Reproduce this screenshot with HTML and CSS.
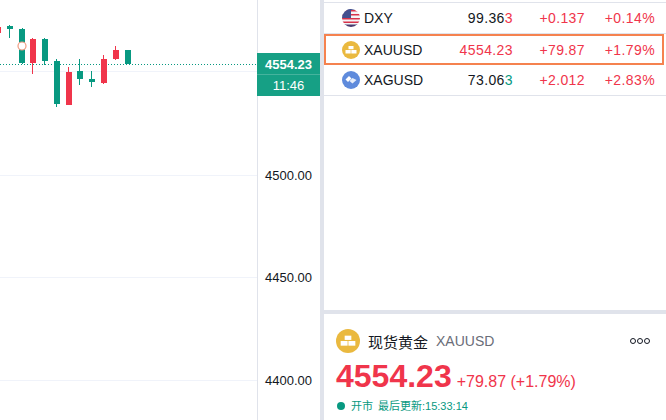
FILE: index.html
```html
<!DOCTYPE html>
<html lang="zh">
<head>
  <meta charset="UTF-8" />
  <title>XAUUSD</title>
  <link rel="stylesheet" href="styles.css">
</head>
<body>

<div class="page">
  <div class="chart">
    <svg class="plot" width="257" height="420" viewBox="0 0 257 420">
      <!-- grid lines -->
      <g fill="#f0f3fa">
        <rect x="0" y="71" width="257" height="1" />
        <rect x="0" y="175" width="257" height="1" />
        <rect x="0" y="277" width="257" height="1" />
        <rect x="0" y="380" width="257" height="1" />
      </g>
      <line x1="0" y1="64.5" x2="257" y2="64.5" stroke="#089981" stroke-width="1" stroke-dasharray="1 2" />
      <!-- green candles -->
      <g fill="#089981">
        <rect x="9" y="25" width="1" height="13" />
        <rect x="7" y="26" width="6" height="3" />
        <rect x="22" y="28" width="1" height="36" />
        <rect x="19" y="29" width="6" height="34" />
        <rect x="44" y="38" width="1" height="27" />
        <rect x="42" y="39" width="6" height="22" />
        <rect x="56" y="59" width="1" height="48" />
        <rect x="54" y="61" width="6" height="43" />
        <rect x="79" y="59" width="1" height="26" />
        <rect x="77" y="71" width="6" height="8" />
        <rect x="91" y="71" width="1" height="16" />
        <rect x="89" y="79" width="6" height="3" />
        <rect x="125" y="50" width="6" height="14" />
      </g>
      <!-- red candles -->
      <g fill="#f0354b">
        <rect x="0" y="27" width="1" height="6" />
        <rect x="32" y="38" width="1" height="36" />
        <rect x="30" y="39" width="6" height="24" />
        <rect x="68" y="67" width="1" height="38" />
        <rect x="66" y="72" width="6" height="33" />
        <rect x="103" y="55" width="1" height="29" />
        <rect x="101" y="59" width="6" height="24" />
        <rect x="115" y="46" width="1" height="14" />
        <rect x="113" y="50" width="6" height="9" />
      </g>
      <circle cx="22" cy="46" r="4" fill="#fff" stroke="#f09a80" stroke-width="1.2" />
    </svg>

    <div class="axis">
      <div class="last-tag">
        <div class="tag-price">4554.23</div>
        <div class="tag-time">11:46</div>
      </div>
      <span class="tick tick-4500">4500.00</span>
      <span class="tick tick-4450">4450.00</span>
      <span class="tick tick-4400">4400.00</span>
    </div>
  </div>

  <div class="side">
    <div class="watchlist">
      <div class="row">
        <svg class="logo" width="18" height="18" viewBox="0 0 18 18">
          <defs><clipPath id="flagClip"><circle cx="9" cy="9" r="9" /></clipPath></defs>
          <g clip-path="url(#flagClip)">
            <rect width="18" height="18" fill="#f4f4f6" />
            <rect y="1" width="18" height="1.5" fill="#d8324a" />
            <rect y="5" width="18" height="1.5" fill="#d8324a" />
            <rect y="9" width="18" height="1.5" fill="#d8324a" />
            <rect y="12.5" width="18" height="1.5" fill="#d8324a" />
            <rect y="15.5" width="18" height="2.5" fill="#4a3a6e" />
            <rect width="18" height="1" fill="#44508f" />
            <rect width="9" height="9" fill="#44508f" />
          </g>
        </svg>
        <span class="symbol">DXY</span>
        <span class="price">99.36<span class="up">3</span></span>
        <span class="change up">+0.137</span>
        <span class="pct up">+0.14%</span>
      </div>
      <div class="row active">
        <svg class="logo" width="18" height="18" viewBox="0 0 18 18">
          <circle cx="9" cy="9" r="9" fill="#eab93f" />
          <g fill="#fff">
            <rect x="6.5" y="5" width="5" height="3.2" />
            <rect x="3.5" y="9" width="5.2" height="3.5" />
            <rect x="9.3" y="9" width="5.2" height="3.5" />
          </g>
        </svg>
        <span class="symbol">XAUUSD</span>
        <span class="price up">4554.23</span>
        <span class="change up">+79.87</span>
        <span class="pct up">+1.79%</span>
      </div>
      <div class="row">
        <svg class="logo" width="18" height="18" viewBox="0 0 18 18">
          <circle cx="9" cy="9" r="9" fill="#5f8bdc" />
          <g fill="#fff">
            <path d="M3.5 8.5 7 5l2.5 2.5L6 11z" />
            <path d="M7.5 10 10.5 7l4 2-4 3.5z" opacity=".85" />
          </g>
        </svg>
        <span class="symbol">XAGUSD</span>
        <span class="price">73.06<span class="down">3</span></span>
        <span class="change up">+2.012</span>
        <span class="pct up">+2.83%</span>
      </div>
    </div>

    <div class="detail">
      <div class="detail-head">
        <svg class="detail-logo" width="24" height="24" viewBox="0 0 18 18">
          <circle cx="9" cy="9" r="9" fill="#eab93f" />
          <g fill="#fff">
            <rect x="6.5" y="5" width="5" height="3.2" />
            <rect x="3.5" y="9" width="5.2" height="3.5" />
            <rect x="9.3" y="9" width="5.2" height="3.5" />
          </g>
        </svg>
        <span class="detail-name">现货黄金</span>
        <span class="detail-symbol">XAUUSD</span>
        <span class="more"><i></i><i></i><i></i></span>
      </div>
      <div class="quote">
        <span class="quote-price">4554.23</span>
        <span class="quote-change">+79.87 (+1.79%)</span>
      </div>
      <div class="status">
        <i class="dot"></i>
        <span>开市</span>
        <span>最后更新:15:33:14</span>
      </div>
    </div>
  </div>
</div>

</body>
</html>
```

FILE: styles.css
```css
body {
  margin: 0;
  font-family: "Liberation Sans", "Noto Sans CJK SC", sans-serif;
  background: white;
  color: #131722;
  overflow: hidden;
}

.page {
  display: flex;
  width: 666px;
  height: 420px;
}

.chart {
  display: flex;
  width: 320px;
  flex: none;
}

.plot {
  display: block;
  flex: none;
}

.axis {
  position: relative;
  width: 63px;
  border-left: 1px solid #e0e3eb;
  box-sizing: border-box;
  font-size: 12px;
}

.last-tag {
  position: absolute;
  top: 53px;
  left: -1px;
  width: 63px;
  height: 43px;
  background: #16a085;
  color: white;
  text-align: center;
}

.tag-price {
  height: 21px;
  line-height: 23px;
  font-size: 13px;
  font-weight: bold;
  border-bottom: 1px solid #45b39d;
}

.tag-time {
  line-height: 21px;
  font-size: 13px;
}

.tick {
  position: absolute;
  left: 7px;
  font-size: 13px;
  line-height: 14px;
}

.tick-4500 { top: 169px; }
.tick-4450 { top: 271px; }
.tick-4400 { top: 374px; }

.side {
  flex: 1;
  display: flex;
  flex-direction: column;
  border-left: 4px solid #e0e3eb;
}

.watchlist {
  height: 307px;
  padding-top: 3px;
  background: linear-gradient(#e0e3eb, #e0e3eb) no-repeat 0 2px / 100% 1px;
  border-bottom: 4px solid #e0e3eb;
}

.row {
  display: grid;
  grid-template-columns: 18px 86px 1fr 72px 70px;
  align-items: center;
  height: 31px;
  padding: 0 11px 0 18px;
  box-sizing: border-box;
  border-bottom: 1px solid #e0e3eb;
  font-size: 14px;
}

.row.active {
  padding: 0 7px 0 16px;
  margin-right: 2px;
  border: 2px solid #f5824f;
}

.logo {
  display: block;
}

.symbol {
  padding-left: 4px;
}

.price, .change, .pct {
  text-align: right;
  letter-spacing: .4px;
}

.up { color: #f0354b; }
.down { color: #089981; }

.detail {
  flex: 1;
  padding: 14px 12px 0 12px;
  overflow: hidden;
}

.detail-head {
  display: flex;
  align-items: center;
  height: 26px;
}

.detail-name {
  margin-left: 8px;
  font-size: 15px;
}

.detail-symbol {
  margin-left: 8px;
  font-size: 14px;
  color: #6a6d78;
}

.more {
  margin-left: auto;
  margin-right: 4px;
  display: flex;
  gap: 1px;
}

.more i {
  width: 4px;
  height: 4px;
  border: 1px solid #131722;
  border-radius: 50%;
}

.quote {
  display: flex;
  align-items: baseline;
  margin-top: 4px;
  color: #f0354b;
}

.quote-price {
  font-size: 32px;
  font-weight: bold;
  line-height: 36px;
}

.quote-change {
  margin-left: 5px;
  font-size: 16px;
}

.status {
  display: flex;
  align-items: center;
  gap: 5px;
  margin-top: 5px;
  font-size: 11px;
  line-height: 14px;
  color: #089981;
}

.dot {
  width: 8px;
  height: 8px;
  margin: 0 1px 0 1px;
  border-radius: 50%;
  background: #089981;
}
```
